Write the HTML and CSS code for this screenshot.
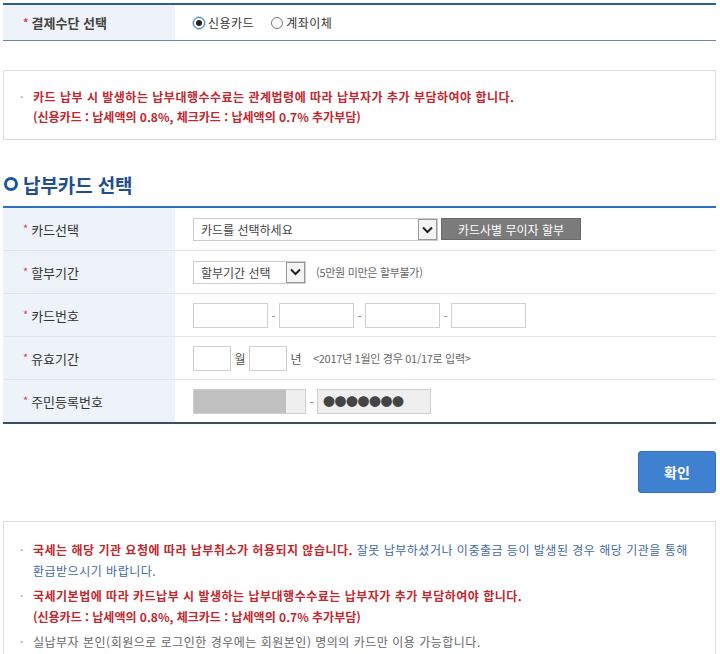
FILE: index.html
```html
<!DOCTYPE html>
<html lang="ko">
<head>
<meta charset="utf-8">
<link rel="stylesheet" href="styles.css">
</head>
<body>
<div class="page">
  <div class="form form-top">
    <div class="row">
      <div class="label strong"><span class="req">*</span>결제수단 선택</div>
      <div class="field">
        <label class="radio"><span class="dot on"></span>신용카드</label>
        <label class="radio"><span class="dot"></span>계좌이체</label>
      </div>
    </div>
  </div>

  <div class="notice notice-one">
    <p class="red wide"><span class="bul">·</span>카드 납부 시 발생하는 납부대행수수료는 관계법령에 따라 납부자가 추가 부담하여야 합니다.</p>
    <p class="red indent">(신용카드 : 납세액의 0.8%, 체크카드 : 납세액의 0.7% 추가부담)</p>
  </div>

  <h2 class="title"><span class="ring"></span>납부카드 선택</h2>

  <div class="form form-card">
    <div class="row">
      <div class="label"><span class="req">*</span>카드선택</div>
      <div class="field">
        <div class="select sel-card"><span class="sel-text">카드를 선택하세요</span><span class="arrow"><svg width="11" height="8" viewBox="0 0 11 8"><path d="M1 1.5 L5.5 6 L10 1.5" fill="none" stroke="#222" stroke-width="2"/></svg></span></div>
        <div class="graybtn">카드사별 무이자 할부</div>
      </div>
    </div>
    <div class="row">
      <div class="label"><span class="req">*</span>할부기간</div>
      <div class="field">
        <div class="select sel-period"><span class="sel-text">할부기간 선택</span><span class="arrow"><svg width="11" height="8" viewBox="0 0 11 8"><path d="M1 1.5 L5.5 6 L10 1.5" fill="none" stroke="#222" stroke-width="2"/></svg></span></div>
        <span class="hint">(5만원 미만은 할부불가)</span>
      </div>
    </div>
    <div class="row">
      <div class="label"><span class="req">*</span>카드번호</div>
      <div class="field">
        <span class="input w75"></span><span class="dash">-</span>
        <span class="input w75"></span><span class="dash">-</span>
        <span class="input w75"></span><span class="dash">-</span>
        <span class="input w75"></span>
      </div>
    </div>
    <div class="row">
      <div class="label"><span class="req">*</span>유효기간</div>
      <div class="field">
        <span class="input w37"></span><span class="unit">월</span>
        <span class="input w37"></span><span class="unit">년</span>
        <span class="hint hint2">&lt;2017년 1월인 경우 01/17로 입력&gt;</span>
      </div>
    </div>
    <div class="row">
      <div class="label"><span class="req">*</span>주민등록번호</div>
      <div class="field">
        <span class="input w112 masked"><span class="mask"></span></span><span class="dash">-</span>
        <span class="input w113 pw">●●●●●●●</span>
      </div>
    </div>
  </div>

  <div class="actions">
    <button class="ok">확인</button>
  </div>

  <div class="notice notice-two">
    <p class="wide"><span class="bul">·</span><b class="red">국세는 해당 기관 요청에 따라 납부취소가 허용되지 않습니다.</b> <span class="blue">잘못 납부하셨거나 이중출금 등이 발생된 경우 해당 기관을 통해</span></p>
    <p class="indent blue wide">환급받으시기 바랍니다.</p>
    <p class="red wide"><span class="bul">·</span>국세기본법에 따라 카드납부 시 발생하는 납부대행수수료는 납부자가 추가 부담하여야 합니다.</p>
    <p class="red indent">(신용카드 : 납세액의 0.8%, 체크카드 : 납세액의 0.7% 추가부담)</p>
    <p class="gray wide"><span class="bul">·</span>실납부자 본인(회원으로 로그인한 경우에는 회원본인) 명의의 카드만 이용 가능합니다.</p>
  </div>
</div>
</body>
</html>
```

FILE: styles.css
```css
* { box-sizing: border-box; }
html, body { margin: 0; padding: 0; background: #fff; }
body {
  font-family: "Noto Sans CJK KR", "Noto Sans", sans-serif;
  font-size: 12px;
  color: #333;
  overflow: hidden;
}
.page { padding: 3px 4px 0 3px; }

.form { width: 713px; }
.form-top { border-top: 2px solid #2b5f94; border-bottom: 1px solid #74879a; }
.form-card { border-top: 2px solid #2f6fbf; border-bottom: 2px solid #3b4e60; }

.row { display: flex; height: 43px; border-bottom: 1px solid #e2e4e8; }
.row:last-child { border-bottom: 0; height: 42px; }
.form-top .row { height: 35px; border-bottom: 0; }

.label {
  width: 172px;
  flex: none;
  background: #eef2f9;
  display: flex;
  align-items: center;
  padding-left: 20px;
  font-size: 13px;
  color: #333;
}
.label.strong { font-weight: bold; color: #444; }
.req { color: #d0455a; font-size: 11px; margin-right: 3px; position: relative; top: -1px; }

.field {
  flex: 1;
  display: flex;
  align-items: center;
  padding-left: 18px;
  font-size: 12px;
  color: #444;
}

.radio { display: inline-flex; align-items: center; margin-right: 17px; font-size: 12px; color: #333; letter-spacing: 0.5px; }
.dot {
  width: 12px; height: 12px; border-radius: 50%;
  border: 1px solid #777; background: #fff;
  margin-right: 3px; position: relative;
}
.dot.on { border-color: #4a7fb8; box-shadow: 0 0 0 1px #bcd4ee; }
.dot.on::after {
  content: ""; position: absolute; left: 2px; top: 2px;
  width: 6px; height: 6px; border-radius: 50%; background: #222;
}

.notice { width: 713px; border: 1px solid #dcdcdc; }
.notice p { margin: 0; line-height: 20px; padding-left: 16px; font-size: 12px; }
.notice .wide { letter-spacing: 0.5px; }
.notice .indent { padding-left: 29px; }
.notice .bul { display: inline-block; width: 13px; color: #999; font-weight: normal; letter-spacing: 0; }
.notice-one { margin-top: 29px; padding: 16px 0 12px; }
.red { color: #c3272e; font-weight: bold; }
.blue { color: #3f6aa6; font-weight: normal; }
.gray { color: #666; }
.notice-two { margin-top: 28px; padding: 17px 0 10px; }
.notice-two p { line-height: 21px; }
.notice-two p + p.red:not(.indent), .notice-two p.gray { margin-top: 4px; }

.title {
  margin: 32px 0 10px;
  height: 24px;
  display: flex; align-items: center;
  font-size: 19px; font-weight: bold; color: #1f4f8f;
  letter-spacing: -0.1px;
}
.ring {
  width: 14px; height: 14px; border-radius: 50%;
  border: 3.5px solid #1b58a0; margin: 0 5px 0 1px;
}

.select {
  height: 23px; border: 1px solid #ccc; background: #fff;
  display: flex; align-items: center; justify-content: space-between;
  font-size: 12px; color: #444;
}
.sel-text { padding-left: 7px; }
.arrow {
  width: 19px; height: 21px; background: #f4f4f4;
  display: flex; align-items: center; justify-content: center;
  border: 1px solid #999;
}
.sel-card { width: 245px; margin-top: 1px; }
.sel-period { width: 113px; }
.graybtn {
  margin-left: 3px; width: 140px; height: 22px;
  background: #7b7b7b; color: #fff; font-size: 12px;
  display: flex; align-items: center; justify-content: center;
  border: 1px solid #6a6a6a;
}
.hint { margin-left: 10px; font-size: 11px; color: #666; letter-spacing: -0.3px; }
.hint2 { margin-left: 8px; }

.input { display: inline-block; height: 25px; border: 1px solid #cfcfcf; background: #fff; }
.w75 { width: 75px; }
.w37 { width: 38px; }
.w112 { width: 113px; }
.w113 { width: 114px; }
.dash { width: 11px; text-align: center; color: #888; font-size: 12px; }
.unit { width: 18px; text-align: center; color: #555; font-size: 12px; }
.masked { background: #efefef; position: relative; }
.mask { position: absolute; left: 0; top: 0; bottom: 0; width: 92px; background: #c0c0c0; }
.pw {
  background: #efefef; color: #444; font-size: 12px;
  display: inline-flex; align-items: center; padding-left: 5px; letter-spacing: -0.5px;
}

.actions { display: flex; justify-content: flex-end; width: 713px; margin-top: 27px; }
.ok {
  width: 78px; height: 42px; border: 1px solid #3470b8; border-radius: 3px;
  background: #3f80d0; color: #fff; font-family: inherit; font-size: 14px; font-weight: bold;
  padding: 0;
}
```
